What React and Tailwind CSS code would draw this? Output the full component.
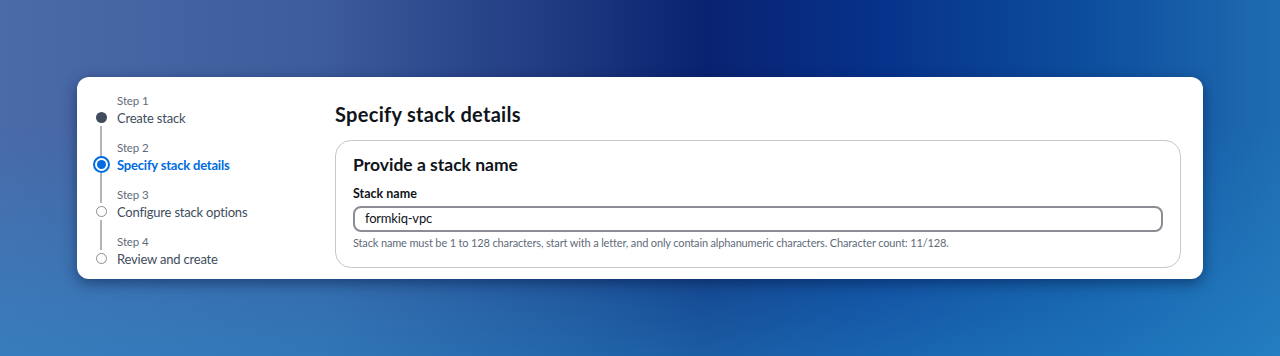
import React from 'react';

const steps = [
    { label: 'Step 1', title: 'Create stack', state: 'done' },
    { label: 'Step 2', title: 'Specify stack details', state: 'active' },
    { label: 'Step 3', title: 'Configure stack options', state: 'todo' },
    { label: 'Step 4', title: 'Review and create', state: 'todo' },
];

const StepDot = ({ state }) => {
    if (state === 'done') {
        return <span className="block w-[11px] h-[11px] rounded-full bg-[#414d5c]" />;
    }
    if (state === 'active') {
        return (
            <span className="flex items-center justify-center w-[17px] h-[17px] rounded-full border-2 border-[#006ce0] bg-white">
                <span className="block w-[9px] h-[9px] rounded-full bg-[#006ce0]" />
            </span>
        );
    }
    return <span className="block w-[11px] h-[11px] rounded-full border border-[#8c8c94] bg-white" />;
};

const Stepper = () => (
    <div className="w-[258px] shrink-0 pt-[16px] pl-[16px]">
        {steps.map((step, i) => (
            <div key={step.label} className="flex">
                <div className="w-[16px] flex flex-col items-center mr-[8px]">
                    <div className={`w-[2px] h-[16px] ${i === 0 ? 'bg-transparent' : 'bg-[#b4b4bb]'}`} />
                    <div className="h-[17px] flex items-center justify-center">
                        <StepDot state={step.state} />
                    </div>
                    {i < steps.length - 1 && <div className="w-[2px] flex-1 bg-[#b4b4bb]" />}
                </div>
                <div className="pb-[13px]">
                    <div className="text-[11.5px] leading-[16px] tracking-[-0.1px] text-[#5f6b7a]">{step.label}</div>
                    <div
                        className={`text-[13px] leading-[18px] tracking-[-0.2px] ${step.state === 'active' ? 'font-bold text-[#006ce0]' : 'text-[#414d5c]'}`}
                    >
                        {step.title}
                    </div>
                </div>
            </div>
        ))}
    </div>
);

export default function App() {
    return (
        <div
            className="w-[1280px] h-[356px] flex items-center justify-center bg-[linear-gradient(180deg,rgba(30,110,190,0)_0%,rgba(30,110,190,0)_35%,rgba(40,140,205,0.55)_100%),linear-gradient(90deg,#4a6aa8_0%,#3d5c9c_25%,#1d377f_45%,#0a2270_55%,#06318a_68%,#0d4e9e_85%,#1f6cb0_100%)]"
            style={{ fontFamily: 'Lato, "Liberation Sans", Arial, sans-serif' }}
        >
            <div className="w-[1126px] h-[202px] bg-white rounded-[12px] shadow-[0_4px_14px_rgba(0,20,60,0.5)] flex">
                <Stepper />
                <div className="flex-1 pr-[22px] pt-[23px]">
                    <h1 className="text-[20px] leading-[28px] tracking-[0.3px] font-bold text-[#0f141a] mb-[12px]">Specify stack details</h1>
                    <div className="border border-[#c6c6cd] rounded-[16px] px-[17px] pt-[12px] pb-[16px]">
                        <h2 className="text-[17.5px] leading-[24px] font-bold text-[#0f141a] mb-[8px]">Provide a stack name</h2>
                        <label className="block text-[12.5px] leading-[18px] font-bold text-[#0f141a] mb-[3px]">Stack name</label>
                        <div className="h-[26px] border-2 border-[#8c8c94] rounded-[8px] flex items-center px-[10px] text-[13px] tracking-[-0.2px] text-[#0f141a]">
                            formkiq-vpc
                        </div>
                        <p className="mt-[3px] text-[11px] leading-[16px] tracking-[-0.15px] text-[#5f6b7a]">
                            Stack name must be 1 to 128 characters, start with a letter, and only contain alphanumeric characters. Character count: 11/128.
                        </p>
                    </div>
                </div>
            </div>
        </div>
    );
}
